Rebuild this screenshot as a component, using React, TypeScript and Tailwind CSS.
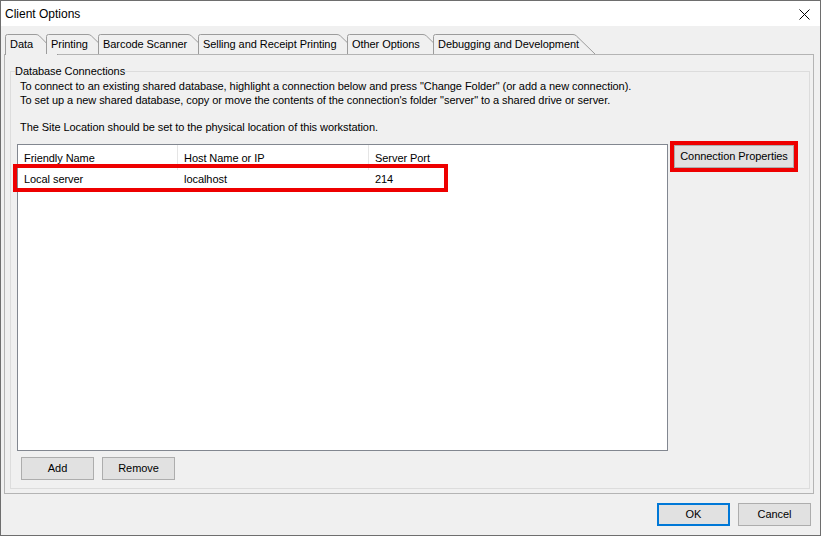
import { type ReactNode } from 'react';

const TABS = [
  { label: 'Data', w: 41 },
  { label: 'Printing', w: 52 },
  { label: 'Barcode Scanner', w: 100 },
  { label: 'Selling and Receipt Printing', w: 149 },
  { label: 'Other Options', w: 86 },
  { label: 'Debugging and Development', w: 150 },
];

function Tab({ label, w, active }: { label: string; w: number; active?: boolean }) {
  const top = w - 8;
  const h = active ? 21 : 20;
  const outline = `M0.5,${h} V2.5 Q0.5,0.5 2.5,0.5 H${top - 2} Q${top},0.5 ${top + 1.5},2 L${top + 20},${h}`;
  return (
    <div className="relative h-[20px] shrink-0" style={{ width: w }}>
      <svg className="absolute left-0 top-0 overflow-visible" width={top + 21} height={h}>
        <path d={`${outline} Z`} fill="#f0f0f0" stroke="none" />
        <path d={outline} fill="none" stroke="#9c9c9c" strokeWidth="1" />
      </svg>
      <span className="relative block pl-[5px] leading-[21px] whitespace-nowrap">{label}</span>
    </div>
  );
}

function Button({ children, primary, className = '' }: { children: ReactNode; primary?: boolean; className?: string }) {
  return (
    <button
      type="button"
      className={`flex items-center justify-center bg-[#e1e1e1] text-black ${
        primary ? 'border-2 border-[#0078d7]' : 'border border-[#adadad]'
      } ${className}`}
    >
      {children}
    </button>
  );
}

export default function App() {
  return (
    <div className="w-[821px] h-[536px] flex flex-col overflow-hidden bg-[#f0f0f0] border border-[#6e6e6e] text-[11px] tracking-[-0.06px] text-black font-['Liberation_Sans',Arial,sans-serif]">
      {/* title bar */}
      <div className="h-[25px] shrink-0 bg-white flex items-center justify-between pl-[4px] pr-[10px]">
        <span className="text-[12px] tracking-normal">Client Options</span>
        <svg width="11" height="11" viewBox="0 0 11 11" className="mt-[2px]">
          <path d="M0.5,0.5 L10.5,10.5 M10.5,0.5 L0.5,10.5" stroke="#000" strokeWidth="1" />
        </svg>
      </div>

      {/* tabs */}
      <div className="mt-[8px] pl-[4px] flex h-[20px] shrink-0">
        {TABS.map((t, i) => (
          <Tab key={t.label} label={t.label} w={t.w} active={i === 0} />
        ))}
      </div>

      {/* tab page */}
      <div className="ml-[3px] w-[810px] h-[440px] shrink-0 border border-[#b4b4b4]">
        <fieldset className="ml-[5px] mt-[9px] w-[800px] h-[425px] border border-[#dcdcdc] p-0">
          <legend className="ml-[4px] px-0 leading-[14px]">Database Connections</legend>
          <div className="pl-[9px] pt-[1px] leading-[14px]">
            <p>To connect to an existing shared database, highlight a connection below and press "Change Folder" (or add a new connection).</p>
            <p>To set up a new shared database, copy or move the contents of the connection's folder "server" to a shared drive or server.</p>
            <p className="mt-[13px]">The Site Location should be set to the physical location of this workstation.</p>
          </div>

          <div className="flex items-start mt-[10px] ml-[6px]">
            <div className="relative w-[651px] h-[307px] bg-white border border-[#828790]">
              <div className="flex h-[25px] items-center">
                <div className="w-[160px] h-full flex items-center pl-[6px] pt-[1px] border-r border-[#e5e5e5]">Friendly Name</div>
                <div className="w-[191px] h-full flex items-center pl-[6px] pt-[1px] border-r border-[#e5e5e5]">Host Name or IP</div>
                <div className="pl-[6px] pt-[1px]">Server Port</div>
              </div>
              <div className="flex h-[18px] items-center">
                <div className="w-[160px] pl-[6px]">Local server</div>
                <div className="w-[191px] pl-[6px]">localhost</div>
                <div className="pl-[6px]">214</div>
              </div>
              <div className="absolute left-[-5px] top-[19px] w-[435px] h-[28px] border-4 border-[#ee0000]" />
            </div>

            <div className="ml-[2px] -mt-[3px] border-4 border-[#ee0000]">
              <Button className="w-[120px] h-[23px]">Connection Properties</Button>
            </div>
          </div>

          <div className="flex gap-[8px] mt-[6px] ml-[10px]">
            <Button className="w-[73px] h-[23px]">Add</Button>
            <Button className="w-[73px] h-[23px]">Remove</Button>
          </div>
        </fieldset>
      </div>

      {/* dialog buttons */}
      <div className="flex justify-end gap-[8px] mt-[9px] pr-[9px]">
        <Button primary className="w-[73px] h-[23px]">OK</Button>
        <Button className="w-[73px] h-[23px]">Cancel</Button>
      </div>
    </div>
  );
}
